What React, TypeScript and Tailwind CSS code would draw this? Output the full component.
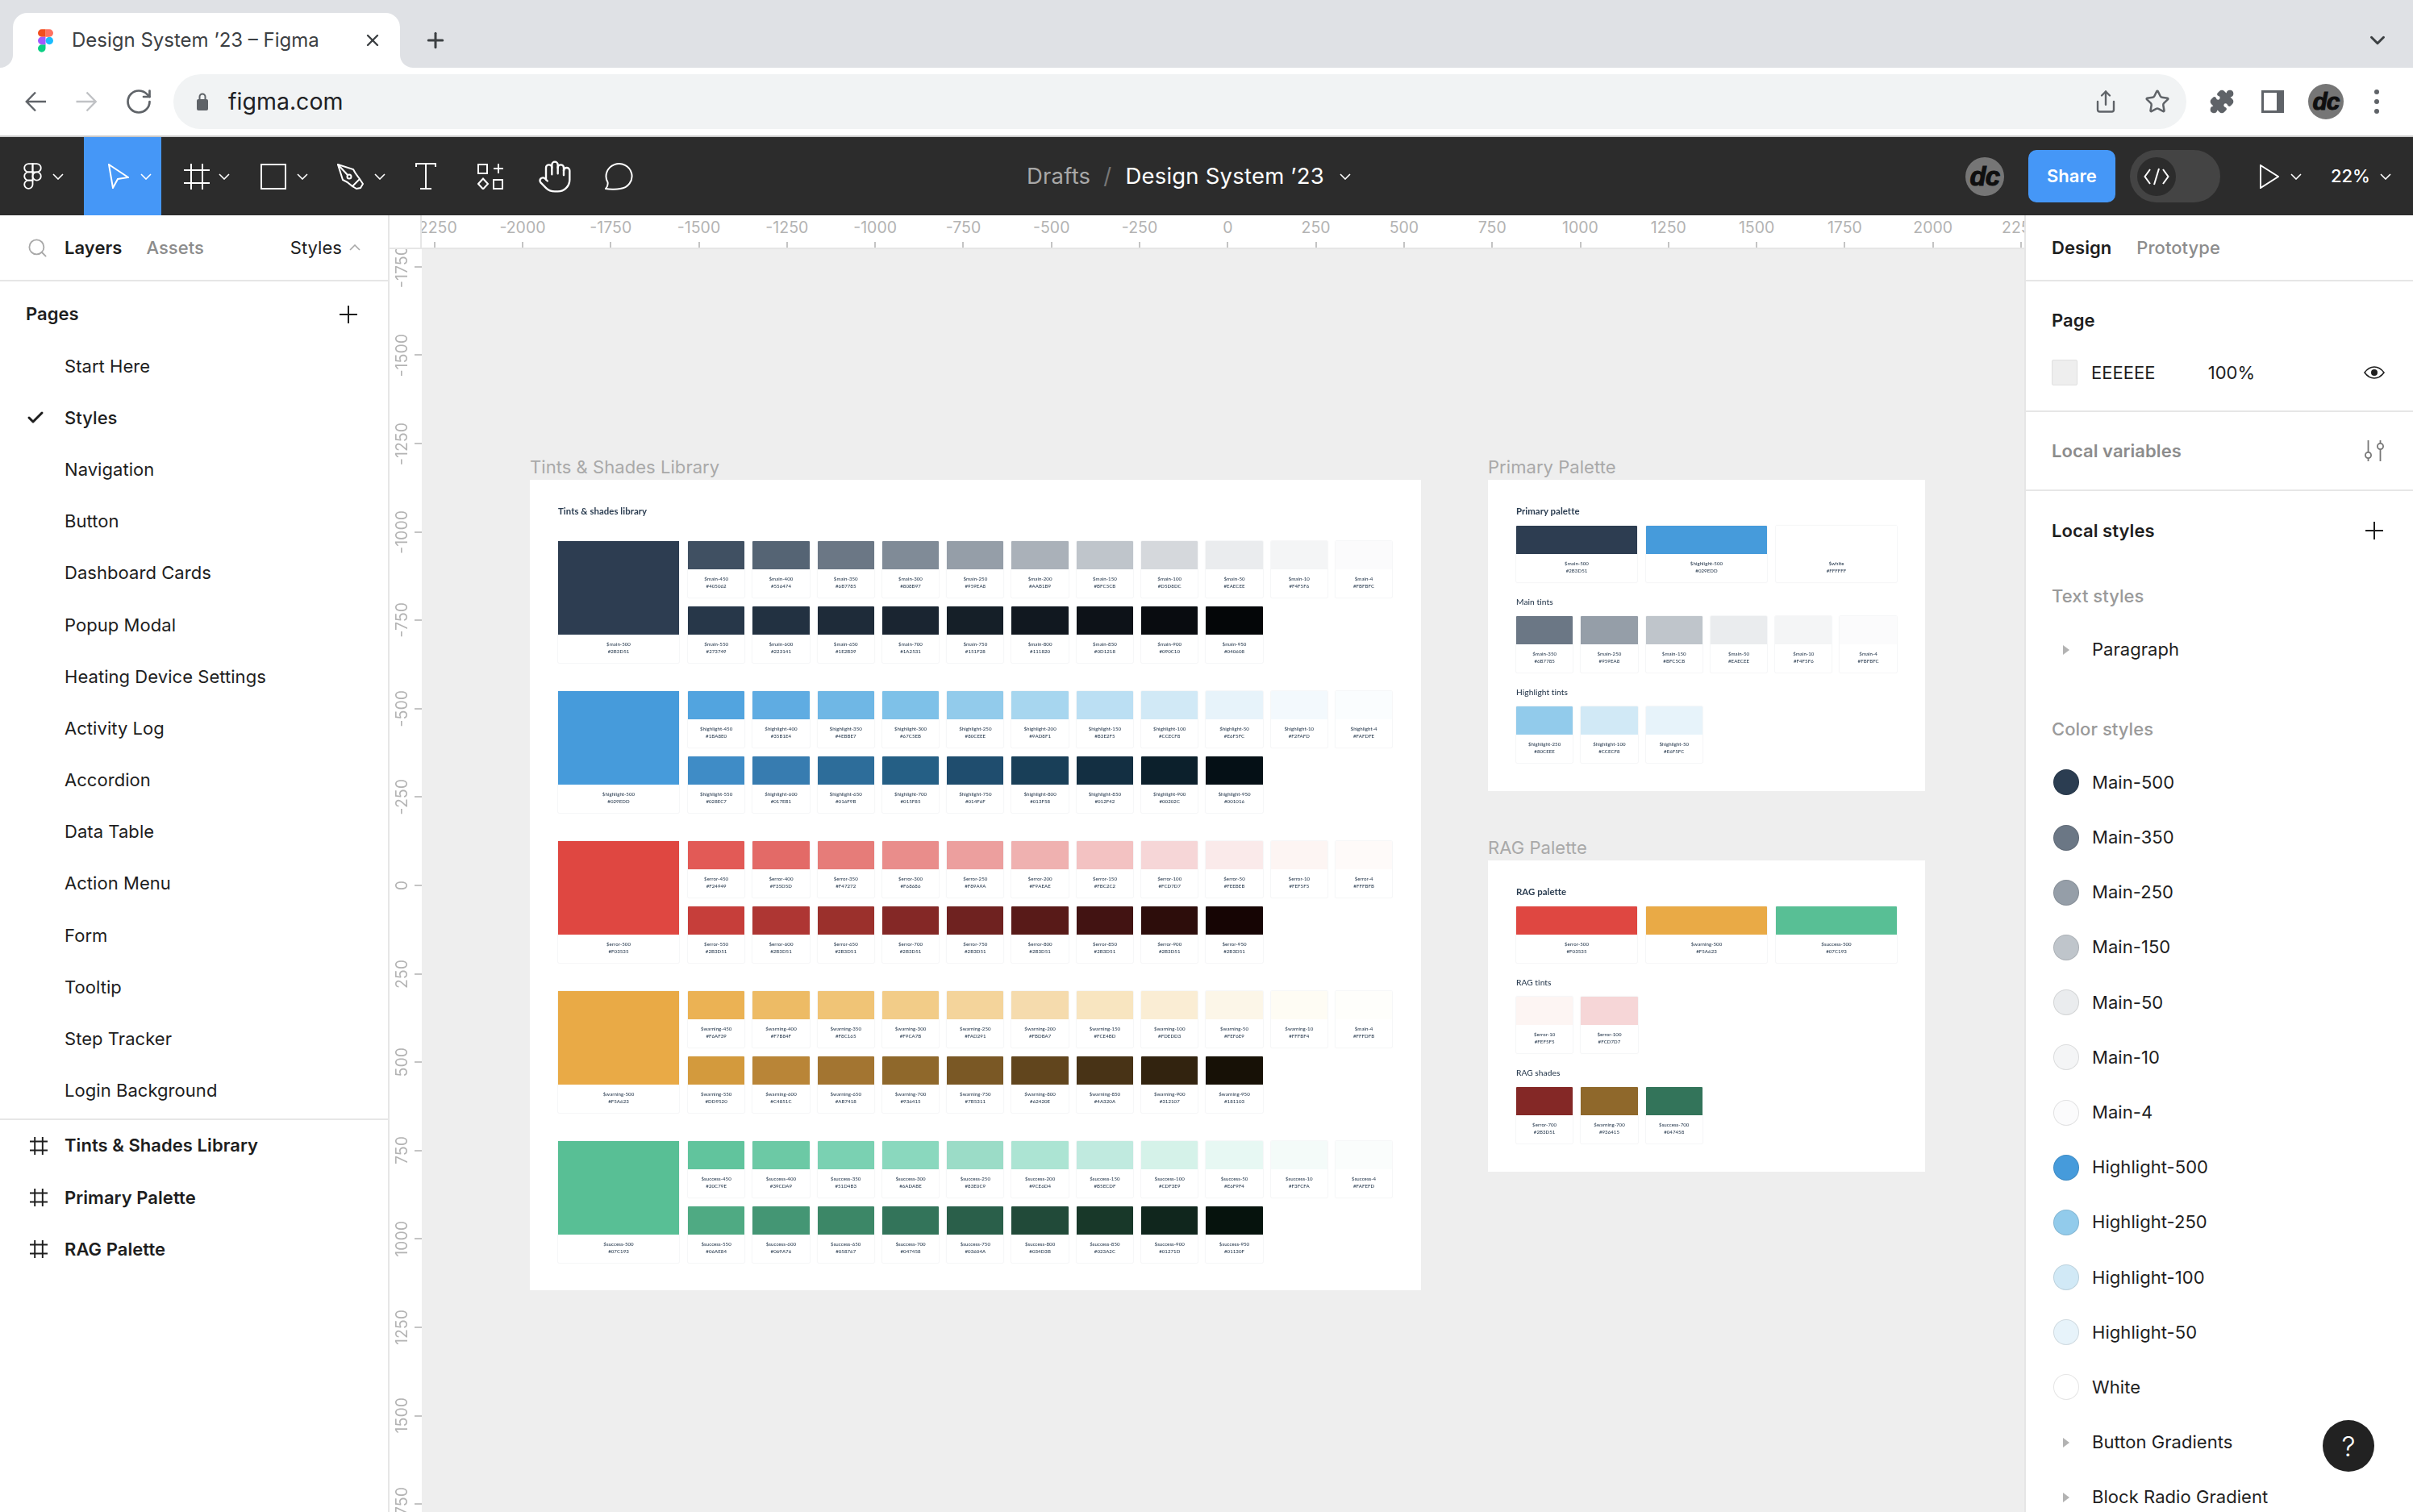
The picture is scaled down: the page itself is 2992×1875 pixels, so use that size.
import React from "react";
import { RotateCw, Share, Star, Puzzle, Hand, Search, Check, Plus, X, ChevronDown } from "lucide-react";

type Sw = [string, string, string];

const main: { big: Sw; a: Sw[]; b: Sw[] } = {
  big: ["$main-500", "#2B3D51", "#2D3D51"],
  a: [
    ["$main-450", "#405062", "#405062"], ["$main-400", "#556474", "#556474"], ["$main-350", "#6B7785", "#6B7785"],
    ["$main-300", "#808B97", "#808B97"], ["$main-250", "#959EA8", "#959EA8"], ["$main-200", "#AAB1B9", "#AAB1B9"],
    ["$main-150", "#BFC5CB", "#BFC5CB"], ["$main-100", "#D5D8DC", "#D5D8DC"], ["$main-50", "#EAECEE", "#EAECEE"],
    ["$main-10", "#F4F5F6", "#F4F5F6"], ["$main-4", "#FBFBFC", "#FBFBFC"],
  ],
  b: [
    ["$main-550", "#273749", "#273749"], ["$main-600", "#223141", "#223141"], ["$main-650", "#1E2B39", "#1E2B39"],
    ["$main-700", "#1A2531", "#1A2531"], ["$main-750", "#151F28", "#151F28"], ["$main-800", "#111820", "#111820"],
    ["$main-850", "#0D1218", "#0D1218"], ["$main-900", "#090C10", "#090C10"], ["$main-950", "#040608", "#040608"],
  ],
};
const highlight: { big: Sw; a: Sw[]; b: Sw[] } = {
  big: ["$highlight-500", "#029EDD", "#469BDB"],
  a: [
    ["$highlight-450", "#1BA8E0", "#52A4DF"], ["$highlight-400", "#35B1E4", "#5FACE2"], ["$highlight-350", "#4EBBE7", "#6FB7E5"],
    ["$highlight-300", "#67C5EB", "#7EC1E8"], ["$highlight-250", "#80CEEE", "#92CBEB"], ["$highlight-200", "#9AD8F1", "#A7D6EF"],
    ["$highlight-150", "#B3E2F5", "#BBDFF3"], ["$highlight-100", "#CCECF8", "#D1E9F6"], ["$highlight-50", "#E6F5FC", "#E7F3FA"],
    ["$highlight-10", "#F2FAFD", "#F3F9FD"], ["$highlight-4", "#FAFDFE", "#FAFDFE"],
  ],
  b: [
    ["$highlight-550", "#028EC7", "#3F8CC6"], ["$highlight-600", "#017EB1", "#377CB0"], ["$highlight-650", "#016F9B", "#2D6D9A"],
    ["$highlight-700", "#015F85", "#255F85"], ["$highlight-750", "#014F6F", "#1F4D6E"], ["$highlight-800", "#013F58", "#193F58"],
    ["$highlight-850", "#012F42", "#132F42"], ["$highlight-900", "#00202C", "#0C202C"], ["$highlight-950", "#001016", "#051016"],
  ],
};
const error: { big: Sw; a: Sw[]; b: Sw[] } = {
  big: ["$error-500", "#F03535", "#DF4741"],
  a: [
    ["$error-450", "#F24949", "#E25A56"], ["$error-400", "#F35D5D", "#E36A67"], ["$error-350", "#F47272", "#E67C79"],
    ["$error-300", "#F68686", "#E98D8B"], ["$error-250", "#F89A9A", "#EC9F9E"], ["$error-200", "#F9AEAE", "#EFB1B0"],
    ["$error-150", "#FBC2C2", "#F3C2C2"], ["$error-100", "#FCD7D7", "#F6D6D7"], ["$error-50", "#FEEBEB", "#FAEAEA"],
    ["$error-10", "#FEF5F5", "#FDF5F3"], ["$error-4", "#FFFBFB", "#FEFAF9"],
  ],
  b: [
    ["$error-550", "#2B3D51", "#C63E3A"], ["$error-600", "#2B3D51", "#AE3633"], ["$error-650", "#2B3D51", "#9B302C"],
    ["$error-700", "#2B3D51", "#842826"], ["$error-750", "#2B3D51", "#6F2220"], ["$error-800", "#2B3D51", "#581A18"],
    ["$error-850", "#2B3D51", "#421312"], ["$error-900", "#2B3D51", "#2D0D0B"], ["$error-950", "#2B3D51", "#160504"],
  ],
};
const warning: { big: Sw; a: Sw[]; b: Sw[] } = {
  big: ["$warning-500", "#F5A623", "#E9AA46"],
  a: [
    ["$warning-450", "#F6AF39", "#EBB254"], ["$warning-400", "#F7B84F", "#EDBB65"], ["$warning-350", "#F8C165", "#F0C476"],
    ["$warning-300", "#F9CA7B", "#F2CC88"], ["$warning-250", "#FAD291", "#F4D49B"], ["$warning-200", "#FBDBA7", "#F5DBAD"],
    ["$warning-150", "#FCE4BD", "#F8E5C0"], ["$warning-100", "#FDEDD3", "#FAEDD4"], ["$warning-50", "#FEF6E9", "#FCF6E8"],
    ["$warning-10", "#FFFBF4", "#FEFCF4"], ["$main-4", "#FFFDFB", "#FEFEFB"],
  ],
  b: [
    ["$warning-550", "#DD9520", "#D39A3D"], ["$warning-600", "#C4851C", "#B98537"], ["$warning-650", "#AB7418", "#A37531"],
    ["$warning-700", "#936415", "#8F682B"], ["$warning-750", "#7B5311", "#7A5825"], ["$warning-800", "#62420E", "#61451D"],
    ["$warning-850", "#4A320A", "#483316"], ["$warning-900", "#312107", "#32230F"], ["$warning-950", "#181103", "#171106"],
  ],
};
const success: { big: Sw; a: Sw[]; b: Sw[] } = {
  big: ["$success-500", "#07C193", "#58BF95"],
  a: [
    ["$success-450", "#20C79E", "#61C49D"], ["$success-400", "#39CDA9", "#6CC9A5"], ["$success-350", "#51D4B3", "#7AD1B2"],
    ["$success-300", "#6ADABE", "#8AD8BE"], ["$success-250", "#83E0C9", "#9BDCC7"], ["$success-200", "#9CE6D4", "#ACE4D3"],
    ["$success-150", "#B5ECDF", "#C0EADF"], ["$success-100", "#CDF3E9", "#D5F2E9"], ["$success-50", "#E6F9F4", "#E7F8F3"],
    ["$success-10", "#F3FCFA", "#F4FBF9"], ["$success-4", "#FAFEFD", "#FAFDFC"],
  ],
  b: [
    ["$success-550", "#06AE84", "#4FAA83"], ["$success-600", "#069A76", "#449674"], ["$success-650", "#058767", "#3C8767"],
    ["$success-700", "#047458", "#33745A"], ["$success-750", "#03604A", "#2A5F4A"], ["$success-800", "#034D3B", "#214A39"],
    ["$success-850", "#023A2C", "#183829"], ["$success-900", "#01271D", "#10261D"], ["$success-950", "#01130F", "#06130D"],
  ],
};

function Card({ s, wide }: { s: Sw; wide?: boolean }) {
  return (
    <div className={`${wide ? "w-[150px]" : "w-[70.3px]"} h-[70px] shrink-0 bg-white rounded-[1px] shadow-[0_0_1.5px_rgba(43,61,81,0.22)] flex flex-col`}>
      <div className="h-[35px] shrink-0 rounded-t-[1px]" style={{ backgroundColor: s[2] }} />
      <div className="flex-1 flex flex-col items-center justify-center text-[6.1px] leading-[8.8px] text-[#2b3d51] font-['Lato',sans-serif] font-medium pb-[1px]">
        <span>{s[0]}</span>
        <span>{s[1]}</span>
      </div>
    </div>
  );
}

function Family({ f }: { f: { big: Sw; a: Sw[]; b: Sw[] } }) {
  return (
    <div className="flex gap-[11px] h-[151px]">
      <div className="w-[150px] h-[151px] shrink-0 bg-white rounded-[1px] shadow-[0_0_1.5px_rgba(43,61,81,0.22)] flex flex-col">
        <div className="h-[116px] shrink-0" style={{ backgroundColor: f.big[2] }} />
        <div className="flex-1 flex flex-col items-center justify-center text-[6.1px] leading-[8.8px] text-[#2b3d51] font-['Lato',sans-serif] font-medium pb-[1px]">
          <span>{f.big[0]}</span>
          <span>{f.big[1]}</span>
        </div>
      </div>
      <div className="flex flex-col gap-[11px]">
        <div className="flex gap-[10px]">{f.a.map((s) => <Card key={s[0] + s[1]} s={s} />)}</div>
        <div className="flex gap-[10px]">{f.b.map((s) => <Card key={s[0]} s={s} />)}</div>
      </div>
    </div>
  );
}

function FrameTitle({ children }: { children: React.ReactNode }) {
  return <div className="h-[16px] mb-[10px] flex items-center text-[11.4px] font-bold text-[#2b3d51] font-['Lato',sans-serif]">{children}</div>;
}
function SubTitle({ children }: { children: React.ReactNode }) {
  return <div className="h-[16px] mt-[17px] mb-[9px] flex items-center text-[10.2px] font-medium text-[#2b3d51] font-['Lato',sans-serif]">{children}</div>;
}
const WhiteCard = ["$white", "#FFFFFF", "#FFFFFF"] as Sw;

function Chev({ up, c = "#ffffff" }: { up?: boolean; c?: string }) {
  return (
    <svg width="14" height="8" viewBox="0 0 14 8" fill="none" className="shrink-0">
      <path d={up ? "M1 7 L7 1 L13 7" : "M1 1 L7 7 L13 1"} stroke={c} strokeWidth="1.6" />
    </svg>
  );
}
function FigmaGlyph({ outline, w, h }: { outline?: boolean; w: number; h: number }) {
  const p = outline
    ? { stroke: "#fff", strokeWidth: 3.4 }
    : {};
  return (
    <svg width={w} height={h} viewBox="-2 -2 42 61" className="shrink-0">
      <path {...p} fill={outline ? "none" : "#1ABCFE"} d="M19 28.5a9.5 9.5 0 1 1 19 0 9.5 9.5 0 0 1-19 0z" />
      <path {...p} fill={outline ? "none" : "#0ACF83"} d="M0 47.5A9.5 9.5 0 0 1 9.5 38H19v9.5a9.5 9.5 0 1 1-19 0z" />
      <path {...p} fill={outline ? "none" : "#FF7262"} d="M19 0v19h9.5a9.5 9.5 0 1 0 0-19H19z" />
      <path {...p} fill={outline ? "none" : "#F24E1E"} d="M0 9.5A9.5 9.5 0 0 0 9.5 19H19V0H9.5A9.5 9.5 0 0 0 0 9.5z" />
      <path {...p} fill={outline ? "none" : "#A259FF"} d="M0 28.5A9.5 9.5 0 0 0 9.5 38H19V19H9.5A9.5 9.5 0 0 0 0 28.5z" />
    </svg>
  );
}
function FrameIcon({ size, c = "#fff", sw = 2 }: { size: number; c?: string; sw?: number }) {
  return (
    <svg width={size} height={size} viewBox="0 0 32 32" fill="none" stroke={c} strokeWidth={sw} className="shrink-0">
      <path d="M9 0V32M23 0V32M0 8H32M0 24H32" />
    </svg>
  );
}
function DC({ size, text }: { size: string; text: string }) {
  return (
    <div className={`${size} rounded-full bg-[#767676] flex items-center justify-center shrink-0 overflow-hidden`}>
      <span className={`${text} font-black italic text-[#0f0f0f] font-['Liberation_Sans',sans-serif] tracking-[-1px] leading-none [-webkit-text-stroke:1px_#0f0f0f]`}>dc</span>
    </div>
  );
}
function Tri() {
  return (
    <svg width="8" height="12" viewBox="0 0 8 12" className="shrink-0"><path d="M0 0 L8 6 L0 12Z" fill="#b3b3b3" /></svg>
  );
}

const pages = ["Start Here", "Styles", "Navigation", "Button", "Dashboard Cards", "Popup Modal", "Heating Device Settings", "Activity Log", "Accordion", "Data Table", "Action Menu", "Form", "Tooltip", "Step Tracker", "Login Background"];
const hTicks = ["-2250", "-2000", "-1750", "-1500", "-1250", "-1000", "-750", "-500", "-250", "0", "250", "500", "750", "1000", "1250", "1500", "1750", "2000", "2250"];
const vTicks = ["-1750", "-1500", "-1250", "-1000", "-750", "-500", "-250", "0", "250", "500", "750", "1000", "1250", "1500", "1750"];
const colorStyles: [string, string][] = [
  ["Main-500", "#2B3D51"], ["Main-350", "#6B7785"], ["Main-250", "#959EA8"], ["Main-150", "#BFC5CB"], ["Main-50", "#EAECEE"], ["Main-10", "#F4F5F6"], ["Main-4", "#FBFBFC"],
  ["Highlight-500", "#469BDB"], ["Highlight-250", "#92CBEB"], ["Highlight-100", "#D1E9F6"], ["Highlight-50", "#E7F3FA"], ["White", "#FFFFFF"],
];

export default function App() {
  return (
    <div className="w-[2992px] h-[1875px] overflow-hidden flex flex-col bg-white font-['Inter',sans-serif] text-[22px] tracking-[0.05px] text-[#1e1e1e]">
      {/* Tab strip */}
      <div className="h-[84px] shrink-0 bg-[#dfe1e5] flex items-end relative">
        <div className="w-[16px] h-[16px] bg-white self-end"><div className="w-full h-full bg-[#dfe1e5] rounded-br-[16px]" /></div>
        <div className="w-[480px] h-[68px] bg-white rounded-t-[18px] flex items-center pl-[30px] pr-[22px]">
          <FigmaGlyph w={21} h={31} />
          <span className="ml-[22px] text-[24px] tracking-normal text-[#3c4043] whitespace-nowrap">Design System ’23 – Figma</span>
          <X size={24} strokeWidth={2.4} className="ml-auto text-[#3c4043]" />
        </div>
        <div className="w-[16px] h-[16px] bg-white self-end"><div className="w-full h-full bg-[#dfe1e5] rounded-bl-[16px]" /></div>
        <Plus size={30} strokeWidth={2.4} className="ml-[13px] mb-[19px] text-[#3c4043]" />
        <ChevronDown size={30} strokeWidth={2.4} className="ml-auto mr-[29px] mb-[19px] text-[#3c4043]" />
      </div>

      {/* Omnibox row */}
      <div className="h-[86px] shrink-0 bg-white border-b-2 border-[#c9c9c9] flex items-center pl-[31px]">
        <svg width="26" height="26" viewBox="0 0 26 26" fill="none" stroke="#5f6368" strokeWidth="2.4" className="shrink-0"><path d="M13 1.5 L1.8 13 L13 24.5 M2 13 H26" /></svg>
        <svg width="27" height="26" viewBox="0 0 26 26" fill="none" stroke="#c0c2c5" strokeWidth="2.4" className="ml-[37px] shrink-0"><path d="M13 1.5 L24.2 13 L13 24.5 M0 13 H24" /></svg>
        <RotateCw size={36} strokeWidth={1.8} className="ml-[33px] text-[#5f6368] shrink-0" />
        <div className="ml-[25px] w-[2496px] h-[68px] shrink-0 rounded-full bg-[#f1f3f4] flex items-center pl-[28px]">
          <svg width="16" height="22" viewBox="0 0 16 22" className="shrink-0">
            <path d="M4.5 8V5a3.5 3.5 0 0 1 7 0v3" fill="none" stroke="#5f6368" strokeWidth="2" />
            <rect x="1" y="8" width="14" height="14" rx="2" fill="#5f6368" />
          </svg>
          <span className="ml-[24px] text-[28.5px] tracking-normal text-[#202124]">figma.com</span>
          <Share size={30} strokeWidth={1.9} className="ml-auto text-[#5f6368]" />
          <Star size={32} strokeWidth={1.9} className="ml-[33px] mr-[20px] text-[#5f6368]" />
        </div>
        <Puzzle size={32} strokeWidth={1.5} className="ml-[28px] text-[#5f6368] fill-[#5f6368] shrink-0" />
        <div className="ml-[33px] w-[28px] h-[28px] border-[3px] border-r-[9px] border-[#5f6368] shrink-0" />
        <DC size="ml-[30px] w-[44px] h-[44px]" text="text-[30px]" />
        <div className="ml-[38px] flex flex-col gap-[6px] shrink-0">
          <span className="w-[6px] h-[6px] rounded-full bg-[#5f6368]" />
          <span className="w-[6px] h-[6px] rounded-full bg-[#5f6368]" />
          <span className="w-[6px] h-[6px] rounded-full bg-[#5f6368]" />
        </div>
      </div>

      {/* Figma toolbar */}
      <div className="h-[97px] shrink-0 bg-[#2c2c2c] flex items-center text-white">
        <div className="w-[104px] h-full flex items-center pl-[29px] gap-[13px]">
          <FigmaGlyph outline w={23} h={33} /><Chev />
        </div>
        <div className="w-[96px] h-full bg-[#4597f7] flex items-center pl-[30px] gap-[14px]">
          <svg width="26" height="31" viewBox="0 0 26 31" fill="none" stroke="#fff" strokeWidth="2" className="shrink-0"><path d="M1 1 L25 17 L12 19 L6 30Z" /></svg>
          <Chev />
        </div>
        <div className="w-[96px] h-full flex items-center pl-[28px] gap-[11px]">
          <FrameIcon size={32} /><Chev />
        </div>
        <div className="w-[96px] h-full flex items-center pl-[27px] gap-[13px]">
          <div className="w-[32px] h-[32px] border-2 border-white" /><Chev />
        </div>
        <div className="w-[96px] h-full flex items-center pl-[26px] gap-[13px]">
          <svg width="33" height="32" viewBox="0 0 33 32" fill="none" stroke="#fff" strokeWidth="2" className="shrink-0">
            <path d="M1 1 L20 7 C23 13 25 15 28 19 L19 28 C15 24 12 22 7 20Z" />
            <path d="M1 1 L13 14" /><circle cx="15" cy="16" r="2.5" />
            <path d="M28 19 L32 25 L29 30 L24 31 L19 28" />
          </svg>
          <Chev />
        </div>
        <div className="w-[80px] h-full flex items-center justify-center">
          <svg width="26" height="33" viewBox="0 0 26 33" fill="none" stroke="#fff" strokeWidth="2" className="shrink-0"><path d="M1 5V1H25V5M13 1V32M6 32H20" /></svg>
        </div>
        <div className="w-[80px] h-full flex items-center justify-center">
          <svg width="32" height="32" viewBox="0 0 32 32" fill="none" stroke="#fff" strokeWidth="2" className="shrink-0">
            <rect x="1" y="1" width="11" height="11" /><path d="M26 0V12M20 6H32" /><path d="M7 18.5L13 25L7 31.5L1 25Z" /><rect x="20" y="20" width="11" height="11" />
          </svg>
        </div>
        <div className="w-[80px] h-full flex items-center justify-center">
          <Hand size={44} strokeWidth={1.3} className="text-white" />
        </div>
        <div className="w-[80px] h-full flex items-center justify-center">
          <svg width="36" height="34" viewBox="0 0 36 34" fill="none" stroke="#fff" strokeWidth="2" className="shrink-0">
            <path d="M1 32 C4 29 4 27 3.5 24 A16 15.5 0 1 1 19 32 C12 33 6 33 1 32Z" />
          </svg>
        </div>
        <div className="ml-[465px] flex items-center text-[27.5px] tracking-[0.2px] whitespace-nowrap">
          <span className="text-[#a8a8a8]">Drafts</span>
          <span className="ml-[16px] text-[#777]">/</span>
          <span className="ml-[17px] text-white">Design System ’23</span>
          <span className="ml-[19px]"><Chev /></span>
        </div>
        <div className="ml-auto flex items-center h-full">
          <DC size="w-[48px] h-[48px]" text="text-[33px]" />
          <div className="ml-[30px] w-[108px] h-[65px] rounded-[10px] bg-[#4597f7] flex items-center justify-center text-[22px] font-semibold">Share</div>
          <div className="ml-[18px] w-[112px] h-[65px] rounded-full bg-[#444444] flex items-center pl-[9px]">
            <div className="w-[48px] h-[48px] rounded-full bg-[#2c2c2c] flex items-center justify-center">
              <svg width="32" height="22" viewBox="0 0 32 22" fill="none" stroke="#fff" strokeWidth="2"><path d="M8 2L1.5 11L8 20M24 2L30.5 11L24 20M19 1L13 21" /></svg>
            </div>
          </div>
          <svg width="24" height="30" viewBox="0 0 24 30" fill="none" stroke="#fff" strokeWidth="2" className="ml-[49px] shrink-0"><path d="M1 1 L23 15 L1 29Z" /></svg>
          <span className="ml-[14px]"><Chev /></span>
          <span className="ml-[36px] text-[22px] font-medium">22%</span>
          <span className="ml-[12px] mr-[27px]"><Chev /></span>
        </div>
      </div>

      {/* Body */}
      <div className="flex-1 min-h-0 flex">
        {/* Left panel */}
        <div className="w-[483px] shrink-0 border-r-2 border-[#e6e6e6] flex flex-col">
          <div className="h-[82px] shrink-0 border-b-2 border-[#e6e6e6] flex items-center pl-[33px] pr-[34px]">
            <Search size={27} strokeWidth={1.6} className="text-[#a8a8a8] shrink-0" />
            <span className="ml-[20px] font-semibold">Layers</span>
            <span className="ml-[30px] font-medium text-[#8c8c8c]">Assets</span>
            <span className="ml-auto">Styles</span>
            <span className="ml-[9px]"><Chev up c="#a8a8a8" /></span>
          </div>
          <div className="h-[73px] shrink-0 flex items-center pl-[32px] pr-[38px] pt-[8px]">
            <span className="font-semibold">Pages</span>
            <svg width="22" height="22" viewBox="0 0 22 22" stroke="#1e1e1e" strokeWidth="2" className="ml-auto"><path d="M11 0V22M0 11H22" /></svg>
          </div>
          {pages.map((p) => (
            <div key={p} className={`h-[64.2px] shrink-0 flex items-center ${p === "Styles" ? "font-medium" : ""}`}>
              <div className="w-[80px] shrink-0 flex pl-[32px]">
                {p === "Styles" && <Check size={24} strokeWidth={3} />}
              </div>
              {p}
            </div>
          ))}
          <div className="mt-[2px] border-t-2 border-[#e6e6e6]">
            {["Tints & Shades Library", "Primary Palette", "RAG Palette"].map((p) => (
              <div key={p} className="h-[64.2px] flex items-center font-semibold">
                <div className="w-[80px] shrink-0 flex pl-[37px]"><FrameIcon size={22} c="#1e1e1e" sw={2.8} /></div>
                {p}
              </div>
            ))}
          </div>
        </div>

        {/* Centre */}
        <div className="flex-1 min-w-0 flex flex-col">
          <div className="h-[42px] shrink-0 flex border-b-2 border-[#e6e6e6] bg-white text-[19.5px] tracking-normal text-[#b3b3b3]">
            <div className="w-[40px] shrink-0 border-r-2 border-[#e6e6e6]" />
            <div className="flex-1 min-w-0 overflow-hidden flex ml-[-39px] [clip-path:inset(0_0_0_39px)]">
              {hTicks.map((t) => (
                <div key={t} className="w-[109.3px] shrink-0 h-full flex flex-col items-center justify-between">
                  <span className="leading-[30px]">{t}</span>
                  <span className="w-[2px] h-[7px] bg-[#c4c4c4]" />
                </div>
              ))}
            </div>
          </div>
          <div className="flex-1 min-h-0 flex">
            <div className="w-[40px] shrink-0 bg-white overflow-hidden text-[19.5px] tracking-normal text-[#b3b3b3]">
              <div className="mt-[-33px] flex flex-col">
                {vTicks.map((t) => (
                  <div key={t} className="h-[109.6px] shrink-0 flex items-center justify-end">
                    <span className="[writing-mode:vertical-rl] rotate-180 leading-[30px]">{t}</span>
                    <span className="ml-[1px] w-[9px] h-[2px] bg-[#c4c4c4]" />
                  </div>
                ))}
              </div>
            </div>
            <div className="flex-1 min-w-0 relative bg-[#eeeeee] overflow-hidden">
              {/* Tints & shades */}
              <div className="absolute left-[134px] top-[255px] leading-[30px] text-[#a9a9a9] whitespace-nowrap">Tints &amp; Shades Library</div>
              <div className="absolute left-[134px] top-[286px] w-[1105px] h-[1005px] bg-white pl-[35px] pt-[31px] blur-[0.3px]">
                <FrameTitle>Tints &amp; shades library</FrameTitle>
                <div className="mt-[29px] flex flex-col gap-[35px]">
                  <Family f={main} /><Family f={highlight} /><Family f={error} /><Family f={warning} /><Family f={success} />
                </div>
              </div>
              {/* Primary */}
              <div className="absolute left-[1322px] top-[255px] leading-[30px] text-[#a9a9a9] whitespace-nowrap">Primary Palette</div>
              <div className="absolute left-[1322px] top-[286px] w-[542px] h-[386px] bg-white pl-[35px] pt-[31px] blur-[0.3px]">
                <FrameTitle>Primary palette</FrameTitle>
                <div className="flex gap-[11px]">
                  <Card wide s={main.big} /><Card wide s={highlight.big} /><Card wide s={WhiteCard} />
                </div>
                <SubTitle>Main tints</SubTitle>
                <div className="flex gap-[10px]">
                  {[main.a[2], main.a[4], main.a[6], main.a[8], main.a[9], main.a[10]].map((s) => <Card key={s[0]} s={s} />)}
                </div>
                <SubTitle>Highlight tints</SubTitle>
                <div className="flex gap-[10px]">
                  {[highlight.a[4], highlight.a[7], highlight.a[8]].map((s) => <Card key={s[0]} s={s} />)}
                </div>
              </div>
              {/* RAG */}
              <div className="absolute left-[1322px] top-[727px] leading-[30px] text-[#a9a9a9] whitespace-nowrap">RAG Palette</div>
              <div className="absolute left-[1322px] top-[758px] w-[542px] h-[386px] bg-white pl-[35px] pt-[31px] blur-[0.3px]">
                <FrameTitle>RAG palette</FrameTitle>
                <div className="flex gap-[11px]">
                  <Card wide s={error.big} /><Card wide s={warning.big} /><Card wide s={success.big} />
                </div>
                <SubTitle>RAG tints</SubTitle>
                <div className="flex gap-[10px]">
                  <Card s={["$error-10", "#FEF5F5", "#FDF5F3"]} /><Card s={["$error-100", "#FCD7D7", "#F6D6D7"]} />
                </div>
                <SubTitle>RAG shades</SubTitle>
                <div className="flex gap-[10px]">
                  <Card s={["$error-700", "#2B3D51", "#842826"]} /><Card s={["$warning-700", "#936415", "#8F682B"]} /><Card s={["$success-700", "#047458", "#33745A"]} />
                </div>
              </div>
            </div>
          </div>
        </div>

        {/* Right panel */}
        <div className="w-[482px] shrink-0 border-l-2 border-[#e6e6e6] relative flex flex-col overflow-hidden">
          <div className="h-[82px] shrink-0 border-b-2 border-[#e6e6e6] flex items-center pl-[32px]">
            <span className="font-semibold">Design</span>
            <span className="ml-[31px] font-medium text-[#8c8c8c]">Prototype</span>
          </div>
          <div className="h-[81px] shrink-0 flex items-center pl-[32px] pt-[16px] font-semibold">Page</div>
          <div className="h-[64px] shrink-0 flex items-center pl-[32px] pr-[35px]">
            <div className="w-[32px] h-[32px] bg-[#eeeeee] border border-[#e0e0e0] rounded-[2px] shrink-0" />
            <span className="ml-[17px]">EEEEEE</span>
            <span className="ml-[65px]">100%</span>
            <svg width="26" height="16" viewBox="0 0 26 16" fill="none" stroke="#1e1e1e" strokeWidth="1.6" className="ml-auto shrink-0">
              <path d="M1 8 C5 2.5 9 1 13 1 S21 2.5 25 8 C21 13.5 17 15 13 15 S5 13.5 1 8Z" />
              <circle cx="13" cy="8" r="4" fill="#1e1e1e" stroke="none" />
            </svg>
          </div>
          <div className="h-[17px] shrink-0 border-b-2 border-[#e6e6e6]" />
          <div className="h-[98px] shrink-0 border-b-2 border-[#e6e6e6] flex items-center pl-[32px] pr-[35px] font-semibold text-[#8c8c8c]">
            Local variables
            <svg width="26" height="28" viewBox="0 0 26 28" fill="none" stroke="#777" strokeWidth="1.8" className="ml-auto">
              <path d="M5.5 1V16M5.5 23V27M20.5 1V5M20.5 12V27" /><circle cx="5.5" cy="19.5" r="3.6" /><circle cx="20.5" cy="8.5" r="3.6" />
            </svg>
          </div>
          <div className="h-[98px] shrink-0 flex items-center pl-[32px] pr-[37px] font-semibold">
            Local styles
            <svg width="22" height="22" viewBox="0 0 22 22" stroke="#1e1e1e" strokeWidth="2" className="ml-auto"><path d="M11 0V22M0 11H22" /></svg>
          </div>
          <div className="h-[65px] shrink-0 flex items-center pl-[32px] font-medium text-[#9a9a9a]">Text styles</div>
          <div className="h-[67px] shrink-0 flex items-center pl-[46px]"><Tri /><span className="ml-[28px]">Paragraph</span></div>
          <div className="h-[97.3px] shrink-0 flex items-center pl-[32px] pt-[34px] font-medium text-[#9a9a9a]">Color styles</div>
          {colorStyles.map(([n, c]) => (
            <div key={n} className="h-[68.2px] shrink-0 flex items-center pl-[34px]">
              <span className="w-[32px] h-[32px] rounded-full border border-black/10 shrink-0" style={{ backgroundColor: c }} />
              <span className="ml-[16px]">{n}</span>
            </div>
          ))}
          <div className="h-[68.2px] shrink-0 flex items-center pl-[46px]"><Tri /><span className="ml-[28px]">Button Gradients</span></div>
          <div className="h-[68.2px] shrink-0 flex items-center pl-[46px]"><Tri /><span className="ml-[28px]">Block Radio Gradient</span></div>
          <div className="absolute right-[48px] bottom-[50px] w-[64px] h-[64px] rounded-full bg-[#222222] flex items-center justify-center text-white text-[34px] font-light">?</div>
        </div>
      </div>
    </div>
  );
}
